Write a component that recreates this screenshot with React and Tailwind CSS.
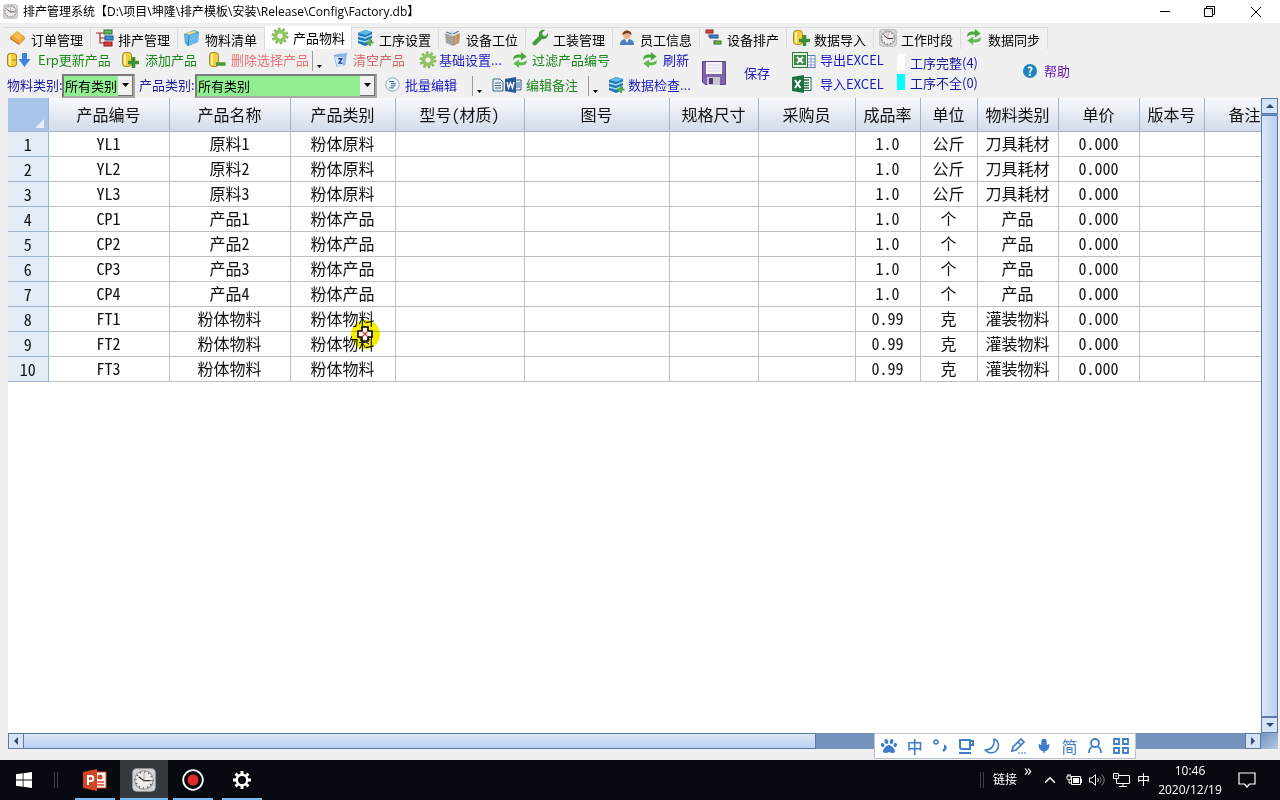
import React from 'react';
import { ChevronUp, Mic } from 'lucide-react';
import { FaPaw } from 'react-icons/fa';

const CloudIcon = ({ children, size = 18, className = '' }) => (
  <svg width={size} height={size} viewBox="0 0 18 18" className={className} aria-hidden="true">
    {children}
  </svg>
);

const DiamondIcon = () => (
  <CloudIcon>
    <path d="M8 2 L16 8 L10 14 L1 8 Z" fill="#efa52e" />
    <path d="M1 8 L10 14 L10 16 L1 10 Z" fill="#c97a14" />
    <path d="M10 14 L16 8 L16 10 L10 16 Z" fill="#dd921f" />
    <path d="M8 3 L14 8 L10 11 L4 7 Z" fill="#f7bd58" />
  </CloudIcon>
);

const TreeIcon = () => (
  <CloudIcon>
    <path d="M0 4 H9 M4 4 V14 H9 M4 9 H9" stroke="#a02a2a" strokeWidth="1.2" fill="none" />
    <rect x="8" y="1" width="8" height="4" fill="#5fb85a" stroke="#2d6e35" />
    <rect x="9" y="7" width="8" height="4" fill="#3d8fd6" stroke="#1c4f8c" />
    <rect x="8" y="13" width="8" height="4" fill="#e03c3c" stroke="#931d1d" />
  </CloudIcon>
);

const BoxIcon = () => (
  <CloudIcon>
    <path d="M1 5 L11 1 L16 3 L15 13 L5 17 L2 14 Z" fill="#4ba3d8" />
    <path d="M2 6 L6 7 L16 4 L15 13 L5 17 Z" fill="#69bce9" />
    <path d="M3 4 L11 2 L14 3 L6 6 Z" fill="#f4d887" />
    <path d="M6 7 L5 17" stroke="#2a76ab" />
  </CloudIcon>
);

const GearIcon = () => (
  <CloudIcon>
    <circle cx="9" cy="9" r="7" fill="none" stroke="#86b85a" strokeWidth="3" strokeDasharray="2.4 2" />
    <circle cx="9" cy="9" r="4.5" fill="none" stroke="#93c467" strokeWidth="4" />
    <circle cx="9" cy="9" r="2.2" fill="#f3f8ee" />
  </CloudIcon>
);

const StackIcon = () => (
  <CloudIcon>
    <path d="M1 4 L8 1 L15 3 L15 14 L8 17 L1 14 Z" fill="#1d78b5" />
    <path d="M1 4 L8 1 L15 3 L9 6 Z" fill="#63b9e6" />
    <path d="M1 7 L8 9 L15 6 M1 11 L8 13 L15 10" stroke="#a8dcf5" strokeWidth="1.4" fill="none" />
    <path d="M13 10 V17 M9.5 13.5 H16.5" stroke="#5cb03f" strokeWidth="2.2" />
  </CloudIcon>
);

const CrateIcon = () => (
  <CloudIcon>
    <path d="M1 4 L9 7 V17 L2 14 Z" fill="#a3a3a3" />
    <path d="M9 7 L16 4 L15 14 L9 17 Z" fill="#b98e62" />
    <path d="M1 4 L8 2 L16 4 L9 7 Z" fill="#e3e1dc" />
    <path d="M2 3 L8 5 M9 5 L15 2" stroke="#4d7fbd" strokeWidth="1.2" />
    <path d="M12 6 V15" stroke="#d9b890" />
  </CloudIcon>
);

const WrenchIcon = () => (
  <CloudIcon>
    <path d="M2 13 L8 7 C7 3 10 0 14 1 L11 4 L12 6.5 L14.500 7 L17 4 C18 8 14 11 11 10 L5 16 C3 17 0 15 2 13 Z" fill="#419c3c" />
  </CloudIcon>
);

const StaffIcon = () => (
  <CloudIcon>
    <path d="M2 16 C2 11 5 10 9 10 C13 10 16 11 16 16 Z" fill="#4d7fc0" />
    <path d="M7 10 L9 14 L11 10 Z" fill="#eef3fa" />
    <circle cx="9" cy="6" r="4" fill="#e7b48d" />
    <path d="M4.5 6 C4 0 14 0 13.5 6 C11 3.5 8 4 4.5 6 Z" fill="#6e3d22" />
  </CloudIcon>
);

const GanttIcon = () => (
  <CloudIcon>
    <path d="M4 5 V8 H6 M10 11 V14" stroke="#4b5566" fill="none" />
    <rect x="1" y="1" width="7" height="3" fill="#e04747" stroke="#8e2323" />
    <rect x="5" y="6" width="8" height="3" fill="#4587cf" stroke="#204f8b" />
    <rect x="9" y="12" width="7" height="3" fill="#78b94e" stroke="#36702a" />
  </CloudIcon>
);

const CylinderIcon = ({ sign }) => (
  <CloudIcon>
    <rect x="1.5" y="1.5" width="9" height="14" rx="3" fill="#efcf3e" stroke="#a8861c" />
    <path d="M4 3 V14" stroke="#fbf0a8" strokeWidth="2" />
    {sign === 'plus' && (
      <path d="M12.5 6 V17 M7 11.5 H18" stroke="#3c9135" strokeWidth="3.6" />
    )}
    {sign === 'minus' && <path d="M8 13 H17.5" stroke="#4d9a3c" strokeWidth="3.6" />}
  </CloudIcon>
);

const ErpIcon = () => (
  <svg width="24" height="18" viewBox="0 0 24 18" aria-hidden="true">
    <rect x="0.5" y="2.5" width="9" height="13" rx="2.5" fill="#efcf3e" stroke="#a8861c" />
    <path d="M3 4 V14" stroke="#fbf0a8" strokeWidth="2" />
    <path d="M5 9 H9" stroke="#a8861c" />
    <path d="M15 2 H20 V8 H23.5 L17.5 16 L11.5 8 H15 Z" fill="#3f83df" />
  </svg>
);

const ClockIcon = ({ size = 18 }) => (
  <CloudIcon size={size}>
    <rect x="0.5" y="0.5" width="17" height="17" rx="3" fill="#d6d6d6" stroke="#a9a9a9" strokeWidth="0.6" />
    <circle cx="9" cy="9" r="7" fill="#ececec" stroke="#8c8c8c" strokeWidth="0.8" />
    <circle cx="9" cy="9" r="6" fill="none" stroke="#565656" strokeWidth="1.2" strokeDasharray="0.8 2.34" />
    <path d="M5 6.5 L9 9.5 H14" stroke="#333" strokeWidth="1" fill="none" />
    <path d="M9 3.5 V10.5" stroke="#cc5b5b" strokeWidth="0.5" />
  </CloudIcon>
);

const SyncIcon = () => (
  <CloudIcon size={16}>
    <path d="M1.5 9 C1 4 4 2.5 10 3 V0 L16.5 5 L10 9.5 V6.5 C6 6 4 6.5 1.5 9 Z" fill="#48a83e" />
    <path d="M16.5 9 C17 14 14 15.5 8 15 V18 L1.5 13 L8 8.5 V11.5 C12 12 14 11.5 16.5 9 Z" fill="#5fb852" />
  </CloudIcon>
);

const BinIcon = () => (
  <CloudIcon size={16}>
    <path d="M2 4 L7 2 L17 1 L15 15 L5 17 Z" fill="#8fb9e6" />
    <path d="M3 5 L13 5 L12 16 L6 16 Z" fill="#d4e5f7" />
    <path d="M7 7.5 H11 L8 12.5 H12" stroke="#1f3f88" strokeWidth="1.6" fill="none" />
    <path d="M2 4 L13 5 L17 1" stroke="#7aa6d6" fill="none" />
  </CloudIcon>
);

const ListIcon = () => (
  <CloudIcon size={15}>
    <circle cx="9" cy="9" r="8" fill="#f2f8fd" stroke="#6c97c6" />
    <path d="M5 5.5 H11 M7 8 H13 M7 10.5 H13 M5 13 H11" stroke="#2d5f9e" strokeWidth="1.2" />
  </CloudIcon>
);

const DocWordIcon = () => (
  <svg width="30" height="16" viewBox="0 0 30 16" aria-hidden="true">
    <path d="M1 2 H8 L11 5 V14 H1 Z" fill="#eaf2f4" stroke="#3d6a7c" />
    <path d="M3 6 H9 M3 8.5 H9 M3 11 H9" stroke="#3d6a7c" />
    <path d="M23 3 H29 V13 H23" fill="#fff" stroke="#2b5797" />
    <path d="M24 6 H28 M24 8 H28 M24 10 H28" stroke="#2b5797" />
    <path d="M13 2 L24 0 V16 L13 14 Z" fill="#2b5797" />
    <path d="M15 5 L16.5 11 L18.5 6 L20.5 11 L22 5" stroke="#fff" strokeWidth="1.4" fill="none" />
  </svg>
);

const SaveIcon = () => (
  <svg width="24" height="24" viewBox="0 0 24 24" aria-hidden="true">
    <path d="M0.5 0.5 H23.5 V23.5 H3 L0.5 21 Z" fill="#7f64ae" stroke="#5b4488" />
    <rect x="4" y="1" width="16" height="12" fill="#f7f5fa" />
    <path d="M5 4 H19 M5 7 H19 M5 10 H19" stroke="#d9d4e4" />
    <rect x="5" y="16" width="13" height="8" fill="#c9c6d2" />
    <rect x="7" y="17" width="4" height="6" fill="#4d3b77" />
  </svg>
);

const ExcelOldIcon = () => (
  <svg width="24" height="17" viewBox="0 0 24 17" aria-hidden="true">
    <rect x="13" y="3.5" width="10" height="12" fill="#fff" stroke="#5a7fb8" />
    <path d="M14 7 H23 M14 10 H23 M14 13 H23 M19 4 V15" stroke="#7d9fd0" />
    <rect x="0.5" y="0.5" width="15" height="15" fill="#e8f2e4" stroke="#2f7a3a" />
    <rect x="2" y="3" width="12" height="10" fill="#3b8c47" />
    <path d="M5 5 L11 11 M11 5 L5 11" stroke="#fff" strokeWidth="2" />
  </svg>
);

const ExcelIcon = () => (
  <svg width="20" height="18" viewBox="0 0 20 18" aria-hidden="true">
    <rect x="10" y="2.5" width="9" height="13" fill="#fff" stroke="#1f7145" />
    <path d="M12 5 H17 M12 8 H17 M12 10.5 H17 M12 13 H17" stroke="#1f7145" strokeWidth="1.4" />
    <path d="M0 2 L12 0 V18 L0 16 Z" fill="#1f7145" />
    <path d="M3 5 L8.5 13 M8.5 5 L3 13" stroke="#fff" strokeWidth="1.8" />
  </svg>
);

const HelpIcon = () => (
  <span className="flex size-[14px] items-center justify-center rounded-full bg-[#1f86bd] text-[12px] leading-none font-bold text-white">
    ?
  </span>
);

const TABS = [
  { name: '订单管理', icon: <DiamondIcon /> },
  { name: '排产管理', icon: <TreeIcon /> },
  { name: '物料清单', icon: <BoxIcon /> },
  { name: '产品物料', icon: <GearIcon />, active: true },
  { name: '工序设置', icon: <StackIcon /> },
  { name: '设备工位', icon: <CrateIcon /> },
  { name: '工装管理', icon: <WrenchIcon /> },
  { name: '员工信息', icon: <StaffIcon /> },
  { name: '设备排产', icon: <GanttIcon /> },
  { name: '数据导入', icon: <CylinderIcon sign="plus" /> },
  { name: '工作时段', icon: <ClockIcon /> },
  { name: '数据同步', icon: <SyncIcon /> },
];

const COLUMNS = [
  { key: 'code', title: '产品编号', width: 'w-[121px]' },
  { key: 'name', title: '产品名称', width: 'w-[121px]' },
  { key: 'type', title: '产品类别', width: 'w-[105px]' },
  { key: 'model', title: '型号(材质)', width: 'w-[129px]' },
  { key: 'drawing', title: '图号', width: 'w-[145px]' },
  { key: 'spec', title: '规格尺寸', width: 'w-[89px]' },
  { key: 'buyer', title: '采购员', width: 'w-[97px]' },
  { key: 'rate', title: '成品率', width: 'w-[65px]' },
  { key: 'unit', title: '单位', width: 'w-[57px]' },
  { key: 'material', title: '物料类别', width: 'w-[81px]' },
  { key: 'price', title: '单价', width: 'w-[81px]' },
  { key: 'version', title: '版本号', width: 'w-[65px]' },
  { key: 'remark', title: '备注', width: 'w-[81px]' },
];

const raw = { type: '粉体原料', rate: '1.0', unit: '公斤', material: '刀具耗材', price: '0.000' };
const product = { type: '粉体产品', rate: '1.0', unit: '个', material: '产品', price: '0.000' };
const powder = { type: '粉体物料', rate: '0.99', unit: '克', material: '灌装物料', price: '0.000' };

const ROWS = [
  { code: 'YL1', name: '原料1', ...raw },
  { code: 'YL2', name: '原料2', ...raw },
  { code: 'YL3', name: '原料3', ...raw },
  { code: 'CP1', name: '产品1', ...product },
  { code: 'CP2', name: '产品2', ...product },
  { code: 'CP3', name: '产品3', ...product },
  { code: 'CP4', name: '产品4', ...product },
  { code: 'FT1', name: '粉体物料', ...powder },
  { code: 'FT2', name: '粉体物料', ...powder },
  { code: 'FT3', name: '粉体物料', ...powder },
];

const TitleBar = () => (
  <header className="flex h-[23px] shrink-0 items-center bg-white pl-[3px] font-['Open_Sans','Noto_Sans_CJK_SC',sans-serif] text-[12px] text-black">
    <ClockIcon size={15} />
    <h1 className="ml-[5px] flex-1 whitespace-nowrap">
      排产管理系统【D:\项目\坤隆\排产模板\安装\Release\Config\Factory.db】
    </h1>
    <button aria-label="最小化" className="flex h-full w-[45px] items-center justify-center">
      <svg width="10" height="10" viewBox="0 0 10 10"><path d="M0 4.5 H10" stroke="#000" /></svg>
    </button>
    <button aria-label="还原" className="flex h-full w-[45px] items-center justify-center">
      <svg width="11" height="11" viewBox="0 0 11 11" fill="none" stroke="#000">
        <path d="M0.5 2.5 H8.5 V10.5 H0.5 Z M2.5 2.5 V0.5 H10.5 V8.5 H8.5" />
      </svg>
    </button>
    <button aria-label="关闭" className="flex h-full w-[48px] items-center justify-center">
      <svg width="10" height="10" viewBox="0 0 10 10"><path d="M0 0 L10 10 M10 0 L0 10" stroke="#000" /></svg>
    </button>
  </header>
);

const TabStrip = () => (
  <nav className="flex h-[26px] items-end pt-[3px] pl-[4px] text-[13px] text-black">
    {TABS.map((tab) => (
      <button
        key={tab.name}
        className={
          tab.active
            ? 'flex h-[23px] w-[87px] items-start gap-[4px] border-r border-[#dcdcdc] bg-white pl-[6px] leading-[24px] whitespace-nowrap'
            : 'flex h-[22px] w-[87px] items-start gap-[4px] border-t border-r border-[#dcdcdc] pl-[5px] leading-[24px] whitespace-nowrap'
        }
      >
        <span className="mt-[1px] flex w-[18px] shrink-0">{tab.icon}</span>
        {tab.name}
      </button>
    ))}
  </nav>
);

const ToolButton = ({ icon, iconWidth, width, color, children }) => (
  <button className={`flex h-[24px] shrink-0 items-center pb-[2px] whitespace-nowrap ${width} ${color}`}>
    <span className={`flex shrink-0 ${iconWidth}`}>{icon}</span>
    {children}
  </button>
);

const DropArrow = () => (
  <button aria-label="更多" className="flex h-[20px] w-[20px] shrink-0 items-end border-l border-[#9a9a9a] pb-[3px] pl-[4px]">
    <svg width="5" height="3" viewBox="0 0 5 3"><path d="M0 0 H5 L2.5 3 Z" fill="#000" /></svg>
  </button>
);

const Combo = ({ id, width }) => (
  <div className={`flex h-[24px] shrink-0 border-2 border-[#7a7a7a] border-r-[#a8a8a8] border-b-[#a8a8a8] bg-[#90ee90] ${width}`}>
    <select id={id} className="min-w-0 flex-1 appearance-none bg-[#90ee90] pl-[1px] text-[13px] text-black outline-none">
      <option>所有类别</option>
    </select>
    <span className="pointer-events-none flex w-[15px] items-center justify-center border-r border-b border-[#6f6f6f] bg-[#f0f0f0]">
      <svg width="7" height="4" viewBox="0 0 7 4"><path d="M0 0 H7 L3.5 4 Z" fill="#000" /></svg>
    </span>
  </div>
);

const Toolbar = () => (
  <div className="flex h-[49px] pl-[7px] text-[13px]">
    <div className="w-[695px] shrink-0">
      <div className="flex h-[24px] items-center">
        <ToolButton icon={<ErpIcon />} iconWidth="w-[31px]" width="w-[114px]" color="text-[#1d861d]">Erp更新产品</ToolButton>
        <ToolButton icon={<CylinderIcon sign="plus" />} iconWidth="w-[24px]" width="w-[87px]" color="text-[#1d861d]">添加产品</ToolButton>
        <ToolButton icon={<CylinderIcon sign="minus" />} iconWidth="w-[23px]" width="w-[104px]" color="text-[#e8747a]">删除选择产品</ToolButton>
        <DropArrow />
        <ToolButton icon={<BinIcon />} iconWidth="w-[21px]" width="w-[87px]" color="text-[#d0696f]">清空产品</ToolButton>
        <ToolButton icon={<GearIcon />} iconWidth="w-[20px]" width="w-[93px]" color="text-[#1a1ac0]">基础设置...</ToolButton>
        <ToolButton icon={<SyncIcon />} iconWidth="w-[20px]" width="w-[130px]" color="text-[#1d861d]">过滤产品编号</ToolButton>
        <ToolButton icon={<SyncIcon />} iconWidth="w-[21px]" width="w-[53px]" color="text-[#1a1ac0]">刷新</ToolButton>
      </div>
      <div className="flex h-[25px] items-center">
        <label htmlFor="material-type" className="w-[55px] pb-[2px] whitespace-nowrap text-[#1a1a9c]">物料类别:</label>
        <Combo id="material-type" width="w-[73px]" />
        <label htmlFor="product-type" className="ml-[4px] w-[56px] pb-[2px] whitespace-nowrap text-[#1a1a9c]">产品类别:</label>
        <Combo id="product-type" width="w-[182px]" />
        <span className="w-[8px]" />
        <ToolButton icon={<ListIcon />} iconWidth="w-[20px]" width="w-[87px]" color="text-[#1a1ac0]">批量编辑</ToolButton>
        <DropArrow />
        <ToolButton icon={<DocWordIcon />} iconWidth="w-[34px]" width="w-[96px]" color="text-[#1d861d]">编辑备注</ToolButton>
        <DropArrow />
        <ToolButton icon={<StackIcon />} iconWidth="w-[20px]" width="w-[85px]" color="text-[#1a1ac0]">数据检查...</ToolButton>
      </div>
    </div>
    <button className="flex w-[90px] shrink-0 items-center gap-[18px] pb-[2px] text-[#1a1ac0]">
      <SaveIcon />
      保存
    </button>
    <div className="w-[105px] shrink-0">
      <ToolButton icon={<ExcelOldIcon />} iconWidth="w-[28px]" width="w-[100px]" color="text-[#1a1ac0]">导出EXCEL</ToolButton>
      <ToolButton icon={<ExcelIcon />} iconWidth="w-[28px]" width="w-[100px]" color="text-[#1a1ac0]">导入EXCEL</ToolButton>
    </div>
    <ul className="flex w-[126px] shrink-0 flex-col justify-center gap-[3px] pb-[3px] leading-[17px] text-[#1a1a9c]">
      <li className="flex items-center gap-[5px]"><span className="h-[16px] w-[8px] bg-white" />工序完整(4)</li>
      <li className="flex items-center gap-[5px]"><span className="h-[16px] w-[8px] bg-[#00ffff]" />工序不全(0)</li>
    </ul>
    <button className="flex shrink-0 items-center gap-[7px] pb-[6px] text-[#6a1ab0]">
      <HelpIcon />
      帮助
    </button>
  </div>
);

const ProductTable = () => (
  <table className="w-[1277px] table-fixed border-collapse text-center text-[16px] text-[#111] [font-feature-settings:'hwid']">
    <thead>
      <tr className="h-[33px] bg-linear-to-b from-[#f8fafc] to-[#d3dceb]">
        <th className="w-[40px] border-r border-b border-[#9fb4cf] bg-[#a9c4e9] p-0">
          <div className="flex h-[28px] items-end justify-end pr-[4px]">
            <svg width="9" height="9" viewBox="0 0 9 9"><path d="M9 0 V9 H0 Z" fill="#e8f0fb" /></svg>
          </div>
        </th>
        {COLUMNS.map((col) => (
          <th key={col.key} className={`border-r border-b border-[#a3b4c8] p-0 font-normal whitespace-nowrap ${col.width}`}>
            {col.title}
          </th>
        ))}
      </tr>
    </thead>
    <tbody>
      {ROWS.map((row, idx) => (
        <tr key={row.code} className="h-[25px] leading-[22px]">
          <th className="border-r border-b border-[#9fb4cf] bg-[#e4ecf7] p-0 font-normal">{idx + 1}</th>
          {COLUMNS.map((col) => (
            <td key={col.key} className="border-r border-b border-[#bcbfc6] p-0 pb-[2px] whitespace-nowrap">{row[col.key]}</td>
          ))}
        </tr>
      ))}
    </tbody>
  </table>
);

const ScrollArrow = ({ label, path, className }) => (
  <button aria-label={label} className={`flex size-[16px] shrink-0 items-center justify-center border border-[#5b78a6] bg-[#d5e3f7] ${className}`}>
    <svg width="8" height="8" viewBox="0 0 8 8"><path d={path} fill="#34496b" /></svg>
  </button>
);

const VerticalScroll = () => (
  <div className="flex w-[17px] shrink-0 flex-col items-stretch bg-[#7393bd]">
    <ScrollArrow label="向上" path="M0 6 L4 2 L8 6 Z" className="w-full" />
    <div className="mt-[1px] flex-1 border border-[#5b78a6] bg-linear-to-r from-[#dbe7f9] to-[#b9d0f0]" />
    <ScrollArrow label="向下" path="M0 2 L4 6 L8 2 Z" className="w-full" />
  </div>
);

const HorizontalScroll = () => (
  <div className="flex h-[16px] shrink-0">
    <div className="flex flex-1 bg-[#7393bd]">
      <ScrollArrow label="向左" path="M6 0 L2 4 L6 8 Z" className="" />
      <div className="flex-[24] border-y border-r border-[#5b78a6] bg-linear-to-b from-[#dbe7f9] to-[#b9d0f0]" />
      <span className="flex-[13]" />
      <ScrollArrow label="向右" path="M2 0 L6 4 L2 8 Z" className="" />
    </div>
    <span className="w-[17px] bg-linear-to-br from-[#7393bd] to-[#b5c9e6]" />
  </div>
);

const MousePointer = () => (
  <>
    <span className="pointer-events-none absolute top-[222px] left-[343px] size-[29px] rounded-full bg-[#f6ee00] mix-blend-multiply" />
    <svg className="pointer-events-none absolute top-[228px] left-[349px]" width="16" height="16" viewBox="0 0 16 16">
      <path d="M5 1 H11 V5 H15 V11 H11 V15 H5 V11 H1 V5 H5 Z" fill="#fff" stroke="#000" strokeWidth="1.6" />
      <path d="M5 5 L11 11 M11 5 L5 11" stroke="#c33c3c" strokeWidth="1.2" />
    </svg>
  </>
);

const ImeBar = () => (
  <div className="absolute right-[144px] bottom-[41px] flex h-[26px] w-[262px] items-center justify-around border border-[#b9c3d0] bg-white px-[1px] text-[#3f7dca]">
    <FaPaw size={16} />
    <span className="w-[16px] text-[16px] leading-none font-medium">中</span>
    <svg width="16" height="16" viewBox="0 0 16 16" fill="none" stroke="currentColor" strokeWidth="1.6">
      <circle cx="4" cy="4" r="2" />
      <path d="M12 8 C14 8 14 11 11 13" strokeWidth="2.6" />
    </svg>
    <svg width="16" height="16" viewBox="0 0 16 16" fill="none" stroke="currentColor" strokeWidth="2">
      <path d="M2 2 H12 V11 H4 C3 11 2 10 2 9 Z M12 3 H15 V7 H12 M1 15 H13" />
    </svg>
    <svg width="16" height="16" viewBox="0 0 16 16" fill="none" stroke="currentColor" strokeWidth="1.6" strokeLinejoin="round">
      <path d="M10 1 C15 3 16 9 12 13 C9 16 4 15 1 12 C7 12 11 8 10 1 Z" />
    </svg>
    <svg width="16" height="16" viewBox="0 0 16 16" fill="none" stroke="currentColor" strokeWidth="1.7">
      <path d="M2 13 L3 9 L11 1 L14 4 L6 12 Z M8 4 L11 7" />
      <path d="M8 15 H16" strokeDasharray="2 1" strokeWidth="1" />
    </svg>
    <Mic size={16} fill="currentColor" />
    <span className="w-[16px] text-[16px] leading-none">简</span>
    <svg width="16" height="16" viewBox="0 0 16 16" fill="none" stroke="currentColor" strokeWidth="1.8">
      <circle cx="8" cy="5" r="4" />
      <path d="M2 15 C2 11 4 9 6 8.500 M14 15 C14 11 12 9 10 8.500" />
    </svg>
    <svg width="16" height="16" viewBox="0 0 16 16" fill="none" stroke="currentColor" strokeWidth="1.8">
      <path d="M1 1 H6 V6 H1 Z M10 1 H15 V6 H10 Z M1 10 H6 V15 H1 Z M10 10 H15 V15 H10 Z" />
    </svg>
  </div>
);

const TaskButton = ({ label, active, children }) => (
  <button
    aria-label={label}
    className={
      active
        ? 'flex h-full w-[48px] items-center justify-center border-b-2 border-[#76b9ed] bg-[#353a3f] pt-[2px]'
        : 'mx-[4px] flex h-full w-[40px] items-center justify-center border-b-2 border-[#76b9ed] pt-[2px]'
    }
  >
    {children}
  </button>
);

const Taskbar = () => (
  <footer className="flex h-[40px] shrink-0 items-center bg-[#070a10] font-['Open_Sans','Noto_Sans_CJK_SC',sans-serif] text-[12px] text-white">
    <button aria-label="开始" className="flex h-full w-[48px] items-center justify-center">
      <svg width="16" height="16" viewBox="0 0 16 16" fill="#fff">
        <path d="M0 2.2 L6.7 1.3 V7.6 H0 Z M7.5 1.2 L16 0 V7.6 H7.5 Z M0 8.4 H6.7 V14.7 L0 13.8 Z M7.5 8.4 H16 V16 L7.5 14.8 Z" />
      </svg>
    </button>
    <span className="ml-[6px] h-[16px] w-[4px] border-x border-[#3d4045]" />
    <div className="ml-[13px] flex h-full gap-[1px]">
      <TaskButton label="PowerPoint">
        <svg width="24" height="22" viewBox="0 0 24 22">
          <rect x="12" y="3" width="11" height="16" fill="#fff" stroke="#d24726" />
          <circle cx="17" cy="8" r="2.5" fill="#d24726" />
          <path d="M14 13 H21 M14 16 H21" stroke="#d24726" strokeWidth="1.3" />
          <path d="M0 3 L14 0 V22 L0 19 Z" fill="#d24726" />
          <path d="M5 16 V7 H8 C11 7 11 12 8 12 H5" stroke="#fff" strokeWidth="2" fill="none" />
        </svg>
      </TaskButton>
      <TaskButton label="排产管理系统" active><ClockIcon size={24} /></TaskButton>
      <TaskButton label="录屏">
        <svg width="22" height="22" viewBox="0 0 22 22">
          <circle cx="11" cy="11" r="9.8" fill="#0a0a0a" stroke="#fff" strokeWidth="1.8" />
          <circle cx="11" cy="11" r="5.5" fill="#e32b2b" />
        </svg>
      </TaskButton>
      <TaskButton label="设置">
        <svg width="20" height="20" viewBox="0 0 20 20" fill="none" stroke="#fff">
          <circle cx="10" cy="10" r="5.3" strokeWidth="2.4" />
          <path d="M10 1 V4 M10 16 V19 M1 10 H4 M16 10 H19 M3.6 3.6 L5.8 5.8 M14.2 14.2 L16.4 16.4 M3.6 16.4 L5.8 14.2 M14.2 5.8 L16.4 3.6" strokeWidth="3" />
        </svg>
      </TaskButton>
    </div>
    <span className="flex-1" />
    <span className="h-[16px] w-[4px] border-x border-[#3d4045]" />
    <span className="ml-[9px]">链接</span>
    <span className="ml-[7px] pb-[20px] text-[16px] leading-none">»</span>
    <button aria-label="显示隐藏的图标" className="ml-[9px]"><ChevronUp size={18} /></button>
    <svg className="ml-[7px]" width="16" height="14" viewBox="0 0 16 14" fill="none" stroke="#fff">
      <path d="M5.5 3.5 H14.5 V11.5 H5.5 Z M15.5 6 V10" />
      <rect x="7" y="5" width="6" height="5" fill="#fff" stroke="none" />
      <path d="M1 3 H5 V6 C5 7 1 7 1 6 Z M2 1 V3 M4 1 V3 M3 7 V10 H5" fill="#070a10" />
    </svg>
    <svg className="ml-[7px]" width="16" height="14" viewBox="0 0 16 14" fill="none" stroke="#fff">
      <path d="M0.5 5 H3 L6.5 1.5 V12.5 L3 9 H0.5 Z M8.5 5 C9.5 6 9.5 8 8.5 9" />
      <path d="M10.5 3.5 C12.5 5.5 12.5 8.5 10.5 10.5 M12.5 1.5 C16 5 16 9 12.5 12.5" stroke="#8b8d90" />
    </svg>
    <svg className="ml-[8px]" width="17" height="16" viewBox="0 0 17 16" fill="none" stroke="#fff">
      <path d="M6 3.5 H16.5 V11.5 H3.5 V7 M10 12 V14.5 M6 14.5 H14 M0.5 1.5 H5.5 V6.5 H0.5 Z M3 3 V5" />
    </svg>
    <span className="ml-[7px] text-[13px]">中</span>
    <time className="ml-[6px] w-[68px] text-center leading-[19px]">10:46<br />2020/12/19</time>
    <button aria-label="通知" className="ml-[14px] mr-[24px]">
      <svg width="18" height="16" viewBox="0 0 18 16" fill="none" stroke="#fff" strokeWidth="1.2">
        <path d="M1 1 H17 V12 H11.5 L9 15 L6.5 12 H1 Z" />
      </svg>
    </button>
  </footer>
);

const App = () => (
  <div className="relative flex h-screen flex-col overflow-hidden bg-[#f0f0f0] font-['Noto_Sans_CJK_SC','Noto_Sans',sans-serif]">
    <TitleBar />
    <TabStrip />
    <Toolbar />
    <main className="mr-[2px] ml-[8px] flex min-h-0 flex-1 flex-col bg-white">
      <div className="flex min-h-0 flex-1">
        <div className="relative min-w-0 flex-1 overflow-hidden">
          <ProductTable />
          <MousePointer />
        </div>
        <VerticalScroll />
      </div>
      <HorizontalScroll />
    </main>
    <div className="h-[11px] shrink-0" />
    <Taskbar />
    <ImeBar />
  </div>
);

export default App;
